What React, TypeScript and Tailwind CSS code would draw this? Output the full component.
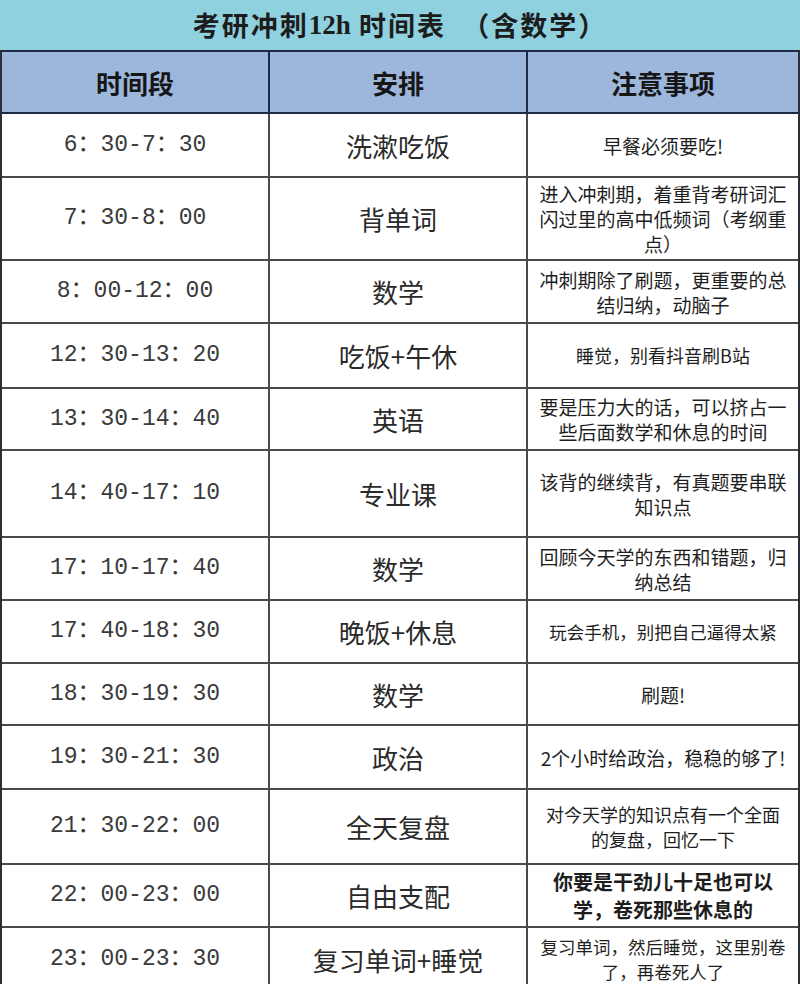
const cjk = "font-['Noto_Sans_CJK_SC',sans-serif]"

type Row = {
  time: string
  plan: string
  notes: string[]
  h: string
  size?: string
  bold?: boolean
}

const rows: Row[] = [
  { time: '6：30-7：30', plan: '洗漱吃饭', notes: ['早餐必须要吃!'], h: 'h-[64px]' },
  { time: '7：30-8：00', plan: '背单词', notes: ['进入冲刺期，着重背考研词汇', '闪过里的高中低频词（考纲重', '点）'], h: 'h-[83px]' },
  { time: '8：00-12：00', plan: '数学', notes: ['冲刺期除了刷题，更重要的总', '结归纳，动脑子'], h: 'h-[63px]' },
  { time: '12：30-13：20', plan: '吃饭+午休', notes: ['睡觉，别看抖音刷B站'], h: 'h-[65px]', size: 'text-[18px]' },
  { time: '13：30-14：40', plan: '英语', notes: ['要是压力大的话，可以挤占一', '些后面数学和休息的时间'], h: 'h-[62px]' },
  { time: '14：40-17：10', plan: '专业课', notes: ['该背的继续背，有真题要串联', '知识点'], h: 'h-[87px]' },
  { time: '17：10-17：40', plan: '数学', notes: ['回顾今天学的东西和错题，归', '纳总结'], h: 'h-[63px]' },
  { time: '17：40-18：30', plan: '晚饭+休息', notes: ['玩会手机，别把自己逼得太紧'], h: 'h-[63px]', size: 'text-[17.5px]' },
  { time: '18：30-19：30', plan: '数学', notes: ['刷题!'], h: 'h-[62px]' },
  { time: '19：30-21：30', plan: '政治', notes: ['2个小时给政治，稳稳的够了!'], h: 'h-[64px]' },
  { time: '21：30-22：00', plan: '全天复盘', notes: ['对今天学的知识点有一个全面', '的复盘，回忆一下'], h: 'h-[75px]', size: 'text-[18px]' },
  { time: '22：00-23：00', plan: '自由支配', notes: ['你要是干劲儿十足也可以', '学，卷死那些休息的'], h: 'h-[63px]', size: 'text-[20px] leading-[28px]', bold: true },
  { time: '23：00-23：30', plan: '复习单词+睡觉', notes: ['复习单词，然后睡觉，这里别卷', '了，再卷死人了'], h: 'h-[64px]', size: 'text-[17.5px]' },
]

export default function App() {
  return (
    <div className={`w-[800px] h-[984px] overflow-hidden bg-white ${cjk}`}>
      {/* title */}
      <div className="h-[50px] bg-[#8fd1df] flex items-center justify-center text-[27px] font-bold text-[#1c1c1c] tracking-[2px]">
        考研冲刺<span className="font-['Liberation_Serif',serif] tracking-normal">12h</span>&nbsp;时间表&nbsp;&nbsp;（含数学）
      </div>

      <div className="border-x-2 border-[#2a2f3a]">
        {/* header */}
        <div className="grid grid-cols-[268px_258px_1fr] h-[64px] bg-[#9db7dc] border-y-2 border-[#1d2a45] text-[26px] font-bold text-[#161616]">
          <div className="flex items-center justify-center border-r-2 border-[#1d2a45]">时间段</div>
          <div className="flex items-center justify-center border-r-2 border-[#1d2a45]">安排</div>
          <div className="flex items-center justify-center">注意事项</div>
        </div>

        {rows.map((r) => (
          <div key={r.time} className={`grid grid-cols-[268px_258px_1fr] ${r.h} border-b-2 border-[#4a4a4a]`}>
            <div className="flex items-center justify-center border-r-2 border-[#4a4a4a] font-['Liberation_Mono','Noto_Sans_CJK_SC',monospace] text-[23px] text-[#3a3a3a]">
              {r.time}
            </div>
            <div className="flex items-center justify-center border-r-2 border-[#4a4a4a] text-[26px] text-[#2a2a2a]">
              {r.plan}
            </div>
            <div className={`flex flex-col items-center justify-center text-center leading-[25px] text-[#1e1e1e] ${r.size ?? 'text-[19px]'} ${r.bold ? 'font-bold' : ''}`}>
              {r.notes.map((n) => (
                <div key={n} className="whitespace-nowrap">{n}</div>
              ))}
            </div>
          </div>
        ))}
      </div>
    </div>
  )
}
